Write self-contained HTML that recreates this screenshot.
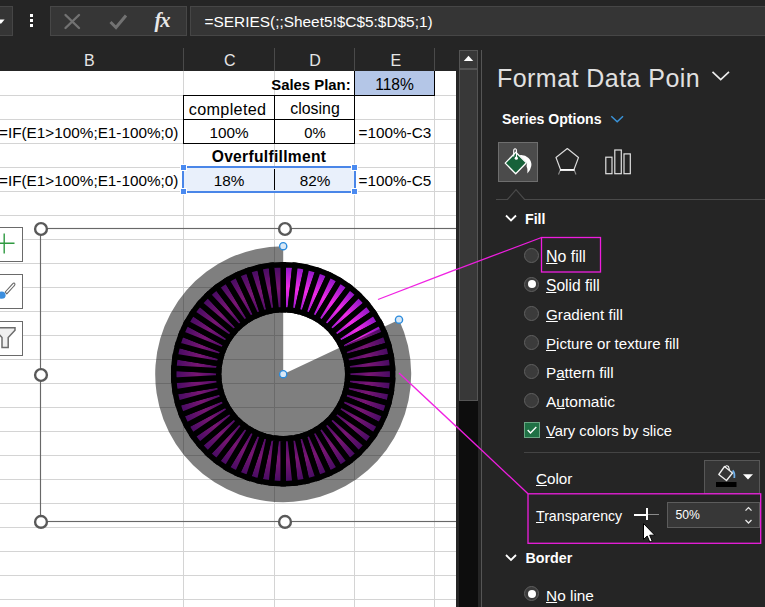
<!DOCTYPE html>
<html>
<head>
<meta charset="utf-8">
<style>
*{box-sizing:border-box;margin:0;padding:0}
html,body{width:765px;height:607px;overflow:hidden;background:#252525}
body{font-family:"Liberation Sans",sans-serif;position:relative;color:#fff}
.abs{position:absolute}
.t{position:absolute;white-space:pre;line-height:1}
/* formula bar */
#topbar{left:0;top:0;width:765px;height:71px;background:#252525}
.fbox{position:absolute;top:6px;height:30px;background:#353535;border:1px solid #464646}
/* sheet */
#sheet{left:0;top:71px;width:455.5px;height:536px;background:#fff;overflow:hidden}
.hl{position:absolute;left:0;width:456px;height:1px;background:#d4d4d4}
.vl{position:absolute;top:0;width:1px;height:536px;background:#d4d4d4}
.cell{position:absolute;color:#000;font-size:15.3px;line-height:24px;height:24px;white-space:pre;text-align:center}
/* pane */
#pane{left:482px;top:40px;width:283px;height:567px;background:#252525}
.opt{position:absolute;left:546px;font-size:15.2px;color:#fff;white-space:pre;line-height:18px}
.opt u{text-decoration:underline;text-underline-offset:1.2px;text-decoration-thickness:1px}
.radio{position:absolute;left:524px;width:15px;height:15px;border-radius:50%;background:#3b3b3b;border:1px solid #606060}
</style>
</head>
<body>
<!-- TOP BAR -->
<div class="abs" id="topbar">
  <div class="fbox" style="left:-1px;width:14px"></div>
  <svg class="abs" style="left:0;top:17px" width="10" height="8"><path d="M-3 2.5 L4.6 2.5 L0.8 7 Z" fill="#fff"/></svg>
  <div class="abs" style="left:30px;top:14px;width:3px;height:3px;background:#fff"></div>
  <div class="abs" style="left:30px;top:19px;width:3px;height:3px;background:#fff"></div>
  <div class="abs" style="left:30px;top:24px;width:3px;height:3px;background:#fff"></div>
  <div class="fbox" style="left:50px;width:137px;background:#363636;border-color:#474747"></div>
  <svg class="abs" style="left:62px;top:10px" width="22" height="22"><path d="M3.5 5 L17 18 M17 5 L3.5 18" stroke="#727272" stroke-width="2.4" fill="none" stroke-linecap="round"/></svg>
  <svg class="abs" style="left:107px;top:10px" width="24" height="22"><path d="M3.5 12 L9 17.5 L19 5.5" stroke="#727272" stroke-width="3" fill="none"/></svg>
  <div class="t" style="left:154.5px;top:9.5px;font-family:'Liberation Serif',serif;font-style:italic;font-weight:bold;font-size:20.5px;color:#e8e8e8;letter-spacing:-1px">fx</div>
  <div class="fbox" style="left:190px;width:580px"></div>
  <div class="t" style="left:204.6px;top:13.7px;font-size:15.4px;color:#fff">=SERIES(;;Sheet5!$C$5:$D$5;1)</div>
  <!-- column headers -->
  <div class="t" style="left:84px;top:53px;font-size:16px;color:#e6e6e6">B</div>
  <div class="t" style="left:224px;top:53px;font-size:16px;color:#e6e6e6">C</div>
  <div class="t" style="left:309.2px;top:53px;font-size:16px;color:#e6e6e6">D</div>
  <div class="t" style="left:390.6px;top:53px;font-size:16px;letter-spacing:0;color:#e6e6e6">E</div>
  <div class="abs" style="left:183px;top:48px;width:1px;height:23px;background:#4a4a4a"></div>
  <div class="abs" style="left:274px;top:48px;width:1px;height:23px;background:#4a4a4a"></div>
  <div class="abs" style="left:354px;top:48px;width:1px;height:23px;background:#4a4a4a"></div>
  <div class="abs" style="left:434px;top:48px;width:1px;height:23px;background:#4a4a4a"></div>
</div>

<!-- SHEET -->
<div class="abs" id="sheet">
  <!-- gridlines: rows every 24px, first at y=95 abs -> 24 rel -->
  <div class="hl" style="top:24px"></div>
<div class="hl" style="top:48px"></div>
<div class="hl" style="top:72px"></div>
<div class="hl" style="top:96px"></div>
<div class="hl" style="top:120px"></div>
<div class="hl" style="top:144px"></div>
<div class="hl" style="top:168px"></div>
<div class="hl" style="top:192px"></div>
<div class="hl" style="top:216px"></div>
<div class="hl" style="top:240px"></div>
<div class="hl" style="top:264px"></div>
<div class="hl" style="top:288px"></div>
<div class="hl" style="top:312px"></div>
<div class="hl" style="top:336px"></div>
<div class="hl" style="top:360px"></div>
<div class="hl" style="top:384px"></div>
<div class="hl" style="top:408px"></div>
<div class="hl" style="top:432px"></div>
<div class="hl" style="top:456px"></div>
<div class="hl" style="top:480px"></div>
<div class="hl" style="top:504px"></div>
<div class="hl" style="top:528px"></div>
<div class="vl" style="left:183px"></div>
<div class="vl" style="left:274px"></div>
<div class="vl" style="left:354px"></div>
<div class="vl" style="left:434px"></div>

<!-- E1 fill -->
<div class="abs" style="left:355px;top:0;width:79px;height:24px;background:#b4c6e7"></div>
<!-- selection fill C5:D5 -->
<div class="abs" style="left:184px;top:97px;width:170px;height:23px;background:#e9f0fb"></div>
<!-- cell text (top rel to sheet = abs-71) -->
<div class="cell" style="left:184px;top:2px;width:166.7px;text-align:right;font-weight:bold;font-size:14.9px">Sales Plan:</div>
<div class="cell" style="left:355px;top:2px;width:79px;font-size:15.6px">118%</div>
<div class="cell" style="left:182.6px;top:26px;width:90px;font-size:16.2px;letter-spacing:0.33px">completed</div>
<div class="cell" style="left:275px;top:26px;width:80px;font-size:15.9px">closing</div>
<div class="cell" style="left:-1px;top:50px;text-align:left">=IF(E1&gt;100%;E1-100%;0)</div>
<div class="cell" style="left:184px;top:50px;width:90px">100%</div>
<div class="cell" style="left:275px;top:50px;width:80px;font-size:14.8px">0%</div>
<div class="cell" style="left:358.5px;top:50px;text-align:left">=100%-C3</div>
<div class="cell" style="left:184px;top:74px;width:170px;font-weight:bold;font-size:15.6px;letter-spacing:0.3px">Overfulfillment</div>
<div class="cell" style="left:-1px;top:98px;text-align:left">=IF(E1&gt;100%;E1-100%;0)</div>
<div class="cell" style="left:184px;top:98px;width:90px">18%</div>
<div class="cell" style="left:275px;top:98px;width:80px">82%</div>
<div class="cell" style="left:358.5px;top:98px;text-align:left">=100%-C5</div>
<!-- black borders C2:D3 -->
<div class="abs" style="left:183px;top:24px;width:172px;height:49px;border:1px solid #000"></div>
<div class="abs" style="left:274px;top:24px;width:1px;height:49px;background:#000"></div>
<div class="abs" style="left:183px;top:48px;width:172px;height:1px;background:#000"></div>
<!-- E1 border -->
<div class="abs" style="left:354px;top:-1px;width:81px;height:26px;border:1px solid #000"></div>
<!-- C5|D5 divider -->
<div class="abs" style="left:274px;top:98px;width:1px;height:21px;background:#000"></div>
<!-- selection border -->
<div class="abs" style="left:182px;top:95px;width:174px;height:27px;border:2px solid #4a86e8"></div>
<div class="abs" style="left:180px;top:93px;width:7px;height:7px;background:#4a8af0;border:1px solid #fff"></div>
<div class="abs" style="left:351px;top:93px;width:7px;height:7px;background:#4a8af0;border:1px solid #fff"></div>
<div class="abs" style="left:180px;top:117px;width:7px;height:7px;background:#4a8af0;border:1px solid #fff"></div>
<div class="abs" style="left:351px;top:117px;width:7px;height:7px;background:#4a8af0;border:1px solid #fff"></div>

</div>


<svg class="abs" style="left:0;top:71px" width="456" height="536" viewBox="0 71 456 536">
<defs>
<radialGradient id="rg" gradientUnits="userSpaceOnUse" cx="283.2" cy="374.2" r="110">
<stop offset="0.60" stop-color="#a01ad0"/>
<stop offset="0.78" stop-color="#f02ce6"/>
<stop offset="0.97" stop-color="#9418c8"/>
</radialGradient>
</defs>
<!-- chart frame -->
<rect x="40.5" y="228.5" width="489" height="293" fill="none" stroke="#686868" stroke-width="1.15"/>
<g fill="url(#rg)" stroke="#000" stroke-width="5.5" stroke-linejoin="miter">
<path d="M283.20 264.70 A109.5 109.5 0 0 1 295.04 265.34 L290.17 310.08 A64.5 64.5 0 0 0 283.20 309.70 Z"/>
<path d="M295.04 265.34 A109.5 109.5 0 0 1 306.74 267.26 L297.07 311.21 A64.5 64.5 0 0 0 290.17 310.08 Z"/>
<path d="M306.74 267.26 A109.5 109.5 0 0 1 318.16 270.43 L303.79 313.08 A64.5 64.5 0 0 0 297.07 311.21 Z"/>
<path d="M318.16 270.43 A109.5 109.5 0 0 1 329.18 274.82 L310.28 315.66 A64.5 64.5 0 0 0 303.79 313.08 Z"/>
<path d="M329.18 274.82 A109.5 109.5 0 0 1 339.65 280.37 L316.45 318.93 A64.5 64.5 0 0 0 310.28 315.66 Z"/>
<path d="M339.65 280.37 A109.5 109.5 0 0 1 349.47 287.03 L322.23 322.85 A64.5 64.5 0 0 0 316.45 318.93 Z"/>
<path d="M349.47 287.03 A109.5 109.5 0 0 1 358.50 294.70 L327.56 327.37 A64.5 64.5 0 0 0 322.23 322.85 Z"/>
<path d="M358.50 294.70 A109.5 109.5 0 0 1 366.66 303.31 L332.36 332.44 A64.5 64.5 0 0 0 327.56 327.37 Z"/>
<path d="M366.66 303.31 A109.5 109.5 0 0 1 373.83 312.75 L336.59 338.00 A64.5 64.5 0 0 0 332.36 332.44 Z"/>
<path d="M373.83 312.75 A109.5 109.5 0 0 1 379.94 322.91 L340.19 343.99 A64.5 64.5 0 0 0 336.59 338.00 Z"/>
<path d="M379.94 322.91 A109.5 109.5 0 0 1 384.92 333.67 L343.12 350.33 A64.5 64.5 0 0 0 340.19 343.99 Z"/>
<path d="M384.92 333.67 A109.5 109.5 0 0 1 388.71 344.91 L345.35 356.94 A64.5 64.5 0 0 0 343.12 350.33 Z"/>
<path d="M388.71 344.91 A109.5 109.5 0 0 1 391.26 356.48 L346.85 363.77 A64.5 64.5 0 0 0 345.35 356.94 Z"/>
<path d="M391.26 356.48 A109.5 109.5 0 0 1 392.54 368.27 L347.61 370.71 A64.5 64.5 0 0 0 346.85 363.77 Z"/>
<path d="M392.54 368.27 A109.5 109.5 0 0 1 392.54 380.13 L347.61 377.69 A64.5 64.5 0 0 0 347.61 370.71 Z"/>
<path d="M392.54 380.13 A109.5 109.5 0 0 1 391.26 391.92 L346.85 384.63 A64.5 64.5 0 0 0 347.61 377.69 Z"/>
<path d="M391.26 391.92 A109.5 109.5 0 0 1 388.71 403.49 L345.35 391.46 A64.5 64.5 0 0 0 346.85 384.63 Z"/>
<path d="M388.71 403.49 A109.5 109.5 0 0 1 384.92 414.73 L343.12 398.07 A64.5 64.5 0 0 0 345.35 391.46 Z"/>
<path d="M384.92 414.73 A109.5 109.5 0 0 1 379.94 425.49 L340.19 404.41 A64.5 64.5 0 0 0 343.12 398.07 Z"/>
<path d="M379.94 425.49 A109.5 109.5 0 0 1 373.83 435.65 L336.59 410.40 A64.5 64.5 0 0 0 340.19 404.41 Z"/>
<path d="M373.83 435.65 A109.5 109.5 0 0 1 366.66 445.09 L332.36 415.96 A64.5 64.5 0 0 0 336.59 410.40 Z"/>
<path d="M366.66 445.09 A109.5 109.5 0 0 1 358.50 453.70 L327.56 421.03 A64.5 64.5 0 0 0 332.36 415.96 Z"/>
<path d="M358.50 453.70 A109.5 109.5 0 0 1 349.47 461.37 L322.23 425.55 A64.5 64.5 0 0 0 327.56 421.03 Z"/>
<path d="M349.47 461.37 A109.5 109.5 0 0 1 339.65 468.03 L316.45 429.47 A64.5 64.5 0 0 0 322.23 425.55 Z"/>
<path d="M339.65 468.03 A109.5 109.5 0 0 1 329.18 473.58 L310.28 432.74 A64.5 64.5 0 0 0 316.45 429.47 Z"/>
<path d="M329.18 473.58 A109.5 109.5 0 0 1 318.16 477.97 L303.79 435.32 A64.5 64.5 0 0 0 310.28 432.74 Z"/>
<path d="M318.16 477.97 A109.5 109.5 0 0 1 306.74 481.14 L297.07 437.19 A64.5 64.5 0 0 0 303.79 435.32 Z"/>
<path d="M306.74 481.14 A109.5 109.5 0 0 1 295.04 483.06 L290.17 438.32 A64.5 64.5 0 0 0 297.07 437.19 Z"/>
<path d="M295.04 483.06 A109.5 109.5 0 0 1 283.20 483.70 L283.20 438.70 A64.5 64.5 0 0 0 290.17 438.32 Z"/>
<path d="M283.20 483.70 A109.5 109.5 0 0 1 271.36 483.06 L276.23 438.32 A64.5 64.5 0 0 0 283.20 438.70 Z"/>
<path d="M271.36 483.06 A109.5 109.5 0 0 1 259.66 481.14 L269.33 437.19 A64.5 64.5 0 0 0 276.23 438.32 Z"/>
<path d="M259.66 481.14 A109.5 109.5 0 0 1 248.24 477.97 L262.61 435.32 A64.5 64.5 0 0 0 269.33 437.19 Z"/>
<path d="M248.24 477.97 A109.5 109.5 0 0 1 237.22 473.58 L256.12 432.74 A64.5 64.5 0 0 0 262.61 435.32 Z"/>
<path d="M237.22 473.58 A109.5 109.5 0 0 1 226.75 468.03 L249.95 429.47 A64.5 64.5 0 0 0 256.12 432.74 Z"/>
<path d="M226.75 468.03 A109.5 109.5 0 0 1 216.93 461.37 L244.17 425.55 A64.5 64.5 0 0 0 249.95 429.47 Z"/>
<path d="M216.93 461.37 A109.5 109.5 0 0 1 207.90 453.70 L238.84 421.03 A64.5 64.5 0 0 0 244.17 425.55 Z"/>
<path d="M207.90 453.70 A109.5 109.5 0 0 1 199.74 445.09 L234.04 415.96 A64.5 64.5 0 0 0 238.84 421.03 Z"/>
<path d="M199.74 445.09 A109.5 109.5 0 0 1 192.57 435.65 L229.81 410.40 A64.5 64.5 0 0 0 234.04 415.96 Z"/>
<path d="M192.57 435.65 A109.5 109.5 0 0 1 186.46 425.49 L226.21 404.41 A64.5 64.5 0 0 0 229.81 410.40 Z"/>
<path d="M186.46 425.49 A109.5 109.5 0 0 1 181.48 414.73 L223.28 398.07 A64.5 64.5 0 0 0 226.21 404.41 Z"/>
<path d="M181.48 414.73 A109.5 109.5 0 0 1 177.69 403.49 L221.05 391.46 A64.5 64.5 0 0 0 223.28 398.07 Z"/>
<path d="M177.69 403.49 A109.5 109.5 0 0 1 175.14 391.92 L219.55 384.63 A64.5 64.5 0 0 0 221.05 391.46 Z"/>
<path d="M175.14 391.92 A109.5 109.5 0 0 1 173.86 380.13 L218.79 377.69 A64.5 64.5 0 0 0 219.55 384.63 Z"/>
<path d="M173.86 380.13 A109.5 109.5 0 0 1 173.86 368.27 L218.79 370.71 A64.5 64.5 0 0 0 218.79 377.69 Z"/>
<path d="M173.86 368.27 A109.5 109.5 0 0 1 175.14 356.48 L219.55 363.77 A64.5 64.5 0 0 0 218.79 370.71 Z"/>
<path d="M175.14 356.48 A109.5 109.5 0 0 1 177.69 344.91 L221.05 356.94 A64.5 64.5 0 0 0 219.55 363.77 Z"/>
<path d="M177.69 344.91 A109.5 109.5 0 0 1 181.48 333.67 L223.28 350.33 A64.5 64.5 0 0 0 221.05 356.94 Z"/>
<path d="M181.48 333.67 A109.5 109.5 0 0 1 186.46 322.91 L226.21 343.99 A64.5 64.5 0 0 0 223.28 350.33 Z"/>
<path d="M186.46 322.91 A109.5 109.5 0 0 1 192.57 312.75 L229.81 338.00 A64.5 64.5 0 0 0 226.21 343.99 Z"/>
<path d="M192.57 312.75 A109.5 109.5 0 0 1 199.74 303.31 L234.04 332.44 A64.5 64.5 0 0 0 229.81 338.00 Z"/>
<path d="M199.74 303.31 A109.5 109.5 0 0 1 207.90 294.70 L238.84 327.37 A64.5 64.5 0 0 0 234.04 332.44 Z"/>
<path d="M207.90 294.70 A109.5 109.5 0 0 1 216.93 287.03 L244.17 322.85 A64.5 64.5 0 0 0 238.84 327.37 Z"/>
<path d="M216.93 287.03 A109.5 109.5 0 0 1 226.75 280.37 L249.95 318.93 A64.5 64.5 0 0 0 244.17 322.85 Z"/>
<path d="M226.75 280.37 A109.5 109.5 0 0 1 237.22 274.82 L256.12 315.66 A64.5 64.5 0 0 0 249.95 318.93 Z"/>
<path d="M237.22 274.82 A109.5 109.5 0 0 1 248.24 270.43 L262.61 313.08 A64.5 64.5 0 0 0 256.12 315.66 Z"/>
<path d="M248.24 270.43 A109.5 109.5 0 0 1 259.66 267.26 L269.33 311.21 A64.5 64.5 0 0 0 262.61 313.08 Z"/>
<path d="M259.66 267.26 A109.5 109.5 0 0 1 271.36 265.34 L276.23 310.08 A64.5 64.5 0 0 0 269.33 311.21 Z"/>
<path d="M271.36 265.34 A109.5 109.5 0 0 1 283.20 264.70 L283.20 309.70 A64.5 64.5 0 0 0 276.23 310.08 Z"/>
</g>
<path d="M283.2 374.2 L399.02 319.70 A128 128 0 1 1 283.20 246.20 Z" fill="#000" fill-opacity="0.5"/>
<!-- magenta annotation lines -->
<line x1="378" y1="299.5" x2="460" y2="268" stroke="#f022e2" stroke-width="1.3"/>
<line x1="399" y1="373" x2="460" y2="430" stroke="#f022e2" stroke-width="1.3"/>
<!-- frame handles -->
<g fill="#fff" stroke="#595959" stroke-width="2.4">
<circle cx="41" cy="229" r="5.9"/><circle cx="285" cy="229" r="5.9"/>
<circle cx="41" cy="375" r="5.9"/>
<circle cx="41" cy="521.9" r="5.9"/><circle cx="285" cy="521.9" r="5.9"/>
</g>
<!-- series handles -->
<g fill="#d9e8f6" stroke="#2b8bdc" stroke-width="1.4">
<circle cx="283.2" cy="246.2" r="3.6"/>
<circle cx="399.0" cy="319.7" r="3.6"/>
<circle cx="283.2" cy="374.2" r="3.6"/>
</g>
</svg>


<!-- chart side buttons -->
<div class="abs" style="left:-2px;top:227px;width:25px;height:35px;background:#fff;border:1px solid #6a6a6a"></div>
<div class="abs" style="left:-2px;top:274px;width:25px;height:35px;background:#fff;border:1px solid #6a6a6a"></div>
<div class="abs" style="left:-2px;top:321px;width:25px;height:35px;background:#fff;border:1px solid #6a6a6a"></div>
<svg class="abs" style="left:0;top:227px" width="23" height="130">
<path d="M4.2 6.5 L4.2 26.5 M-1 16.2 L14.5 16.2" stroke="#2f9a41" stroke-width="1.4" fill="none"/>
<path d="M5.2 65 L12.6 56.8 Q14.2 55.4 14.8 56.6 Q15.4 57.6 14 59 L6.8 66.8 Z" fill="#fff" stroke="#666" stroke-width="1.1" stroke-linejoin="round"/>
<ellipse cx="1.6" cy="68.2" rx="4" ry="3.6" fill="#3b8ede"/>
<path d="M-2 100.8 L15 100.8 L15 103.2 L8.2 110.6 L8.2 120.4 L2 120.4 L2 110.6 L-2 106" fill="#efefef" stroke="#6c6c6c" stroke-width="1.5" stroke-linejoin="miter"/>
</svg>
<!-- vertical scrollbar -->
<div class="abs" style="left:456px;top:40px;width:26px;height:567px;background:#252525"></div>
<div class="abs" style="left:459px;top:69px;width:19px;height:538px;background:#0d0d0d"></div>
<div class="abs" style="left:459px;top:50px;width:19px;height:19px;background:#383838;border:1px solid #555"></div>
<svg class="abs" style="left:459px;top:50px" width="19" height="19"><path d="M4.8 11 L14.2 11 L9.5 5.8 Z" fill="#fff"/></svg>
<div class="abs" style="left:459px;top:69px;width:19px;height:332px;background:#383838;border:1px solid #555"></div>

<!-- PANE -->
<div class="abs" id="pane"></div>
<div class="abs" style="left:481px;top:50px;width:1px;height:557px;background:#555"></div>

<!--PANE-->

<!-- title -->
<div class="t" style="left:497px;top:63px;width:203px;height:30px;overflow:hidden;font-size:25px;letter-spacing:0.45px;color:#e0e0e0;line-height:30px">Format Data Point</div>
<svg class="abs" style="left:708px;top:66px" width="26" height="20"><path d="M4.5 5.8 L12.7 13.5 L21 5.8" stroke="#ececec" stroke-width="1.7" fill="none"/></svg>
<div class="t" style="left:502px;top:110.5px;font-size:14.1px;font-weight:bold;color:#fff;line-height:16px">Series Options</div>
<svg class="abs" style="left:608px;top:112px" width="20" height="14"><path d="M3.3 4.3 L9.2 9.8 L15 4.3" stroke="#3a94da" stroke-width="1.5" fill="none"/></svg>
<!-- icon row -->
<div class="abs" style="left:498px;top:142px;width:40px;height:40px;background:#4b4b4b;border:1px solid #6e6e6e"></div>
<svg class="abs" style="left:498px;top:142px" width="40" height="40">
<path d="M21.5 13.2 Q27 12.6 30.5 16 Q34 19.5 33.3 24 Q32.5 28.5 29.4 31.5 Q30 27 28.6 24.6 Q28.4 22.5 29.2 21 Z" fill="#fff"/>
<path d="M17.8 10.2 L28.4 20.7 L17.7 31.8 L7.2 21.1 Z" fill="#17623a" stroke="#fff" stroke-width="1.3" stroke-linejoin="round"/>
<path d="M15.7 14.6 L15.7 9.1 Q15.7 6.8 17.1 6.8 Q18.5 6.8 18.5 9.1 L18.5 15" fill="none" stroke="#fff" stroke-width="1.1"/>
<circle cx="18.3" cy="16.2" r="1.6" fill="#fff"/>
</svg>
<svg class="abs" style="left:548px;top:142px" width="40" height="40">
<path d="M19.3 6.5 L30.5 15.5 L26 27.5 L12.5 27.5 L8 15.5 Z" fill="none" stroke="#dcdcdc" stroke-width="1.15" stroke-linejoin="round"/>
<path d="M12.5 27.5 L10.5 32.5 M26 27.5 L28 32.5" stroke="#8e8e8e" stroke-width="1.1"/>
<path d="M12 28 L26.5 28" stroke="#fff" stroke-width="1.8"/>
</svg>
<svg class="abs" style="left:598px;top:142px" width="40" height="40">
<g fill="none" stroke="#e2e2e2" stroke-width="1.2">
<rect x="7.8" y="15.2" width="6.2" height="16.5"/><rect x="16.8" y="8" width="6.5" height="23.7"/><rect x="26" y="11.9" width="6.3" height="19.8"/>
</g></svg>
<!-- divider with notch -->
<svg class="abs" style="left:490px;top:186px" width="275" height="16"><path d="M6 13.5 L17.5 13.5 L26 3.7 L34.5 13.5 L275 13.5" fill="none" stroke="#4a4a4a" stroke-width="1.2"/></svg>
<!-- Fill header -->
<svg class="abs" style="left:503px;top:211px" width="16" height="14"><path d="M3 4.5 L8 9.5 L13 4.5" stroke="#fff" stroke-width="1.8" fill="none"/></svg>
<div class="t" style="left:525px;top:211px;font-size:14.2px;font-weight:bold;color:#fff;line-height:16px">Fill</div>

<div class="radio" style="top:247.8px"></div>
<div class="opt" style="top:247.5px;font-size:15.9px"><u>N</u>o fill</div>
<div class="radio" style="top:276.8px"></div>
<div class="abs" style="left:527.5px;top:280.3px;width:8px;height:8px;border-radius:50%;background:#fff"></div>
<div class="opt" style="top:276.5px;font-size:15.6px"><u>S</u>olid fill</div>
<div class="radio" style="top:305.8px"></div>
<div class="opt" style="top:305.5px;font-size:15.2px"><u>G</u>radient fill</div>
<div class="radio" style="top:334.8px"></div>
<div class="opt" style="top:334.5px;font-size:15.05px"><u>P</u>icture or texture fill</div>
<div class="radio" style="top:363.8px"></div>
<div class="opt" style="top:363.5px;font-size:15.2px">P<u>a</u>ttern fill</div>
<div class="radio" style="top:392.8px"></div>
<div class="opt" style="top:392.5px;font-size:15.5px">A<u>u</u>tomatic</div>

<!-- checkbox -->
<div class="abs" style="left:524px;top:422px;width:16px;height:16px;background:#1f7145;border:1px solid #6aa583"></div>
<svg class="abs" style="left:524px;top:422px" width="16" height="16"><path d="M3.7 8 L6.5 10.9 L12.3 5" stroke="#fff" stroke-width="1.4" fill="none"/></svg>
<div class="opt" style="top:421.5px;font-size:14.75px"><u>V</u>ary colors by slice</div>
<!-- divider -->
<div class="abs" style="left:524px;top:452px;width:236px;height:1px;background:#444"></div>
<!-- color -->
<div class="opt" style="left:536px;top:469.5px"><u>C</u>olor</div>
<div class="abs" style="left:704px;top:460px;width:56px;height:34px;background:#353535;border:1px solid #575757"></div>
<svg class="abs" style="left:704px;top:460px" width="56" height="34">
<rect x="12" y="22" width="20.5" height="5" fill="#000"/>
<path d="M20.5 6.5 L28.5 13 L22.5 20.5 L14.8 14.5 Z" fill="none" stroke="#f0f0f0" stroke-width="1.3" stroke-linejoin="round"/>
<path d="M21 7.5 Q22 4.5 24.5 6.5 L25.5 10" fill="none" stroke="#f0f0f0" stroke-width="1.1"/>
<path d="M28.6 10.5 Q31 12.5 30.3 18" fill="none" stroke="#6fb0ea" stroke-width="1.8"/>
<path d="M39 14.2 L49 14.2 L44 19.5 Z" fill="#fff"/>
</svg>
<!-- transparency -->
<div class="opt" style="left:536px;top:507px;font-size:14.2px"><u>T</u>ransparency</div>
<div class="abs" style="left:634px;top:513.5px;width:13px;height:2px;background:#fff"></div>
<div class="abs" style="left:647px;top:514px;width:12px;height:1px;background:#8a8a8a"></div>
<div class="abs" style="left:646px;top:508px;width:2px;height:12px;background:#fff"></div>
<div class="abs" style="left:667px;top:502px;width:93px;height:26px;background:#373737;border:1px solid #5c5c5c"></div>
<div class="t" style="left:675.5px;top:508px;font-size:12.2px;color:#fff;line-height:14px">50%</div>
<svg class="abs" style="left:742px;top:503px" width="14" height="24"><path d="M3.5 7.6 L6.5 4.6 L9.5 7.6 M3.5 17 L6.5 20 L9.5 17" stroke="#e8e8e8" stroke-width="1.3" fill="none"/></svg>
<!-- Border header -->
<svg class="abs" style="left:503px;top:550px" width="16" height="14"><path d="M3 5 L8 10 L13 5" stroke="#fff" stroke-width="1.8" fill="none"/></svg>
<div class="t" style="left:525.5px;top:550px;font-size:14.3px;font-weight:bold;color:#fff;line-height:16px">Border</div>
<div class="radio" style="top:586.3px"></div>
<div class="abs" style="left:527.5px;top:589.8px;width:8px;height:8px;border-radius:50%;background:#fff"></div>
<div class="opt" style="top:587px;font-size:15.4px"><u>N</u>o line</div>
<!-- magenta annotations -->
<svg class="abs" style="left:456px;top:200px" width="309" height="407" viewBox="456 200 309 407">
<g fill="none" stroke="#ee1edf" stroke-width="1.3">
<rect x="541.5" y="237.5" width="59" height="34.5"/>
<rect x="528" y="493.8" width="232.7" height="49.5"/>
<line x1="456" y1="269.6" x2="541.5" y2="237.5"/>
<line x1="456" y1="426" x2="528" y2="493.8"/>
</g>
<!-- cursor -->
<path d="M643.5 523.5 L643.5 539.5 L647.2 536 L649.8 542 L652.2 541 L649.7 535.2 L654.8 535.2 Z" fill="#fff" stroke="#000" stroke-width="1" stroke-linejoin="round"/>
</svg>

</body>
</html>
